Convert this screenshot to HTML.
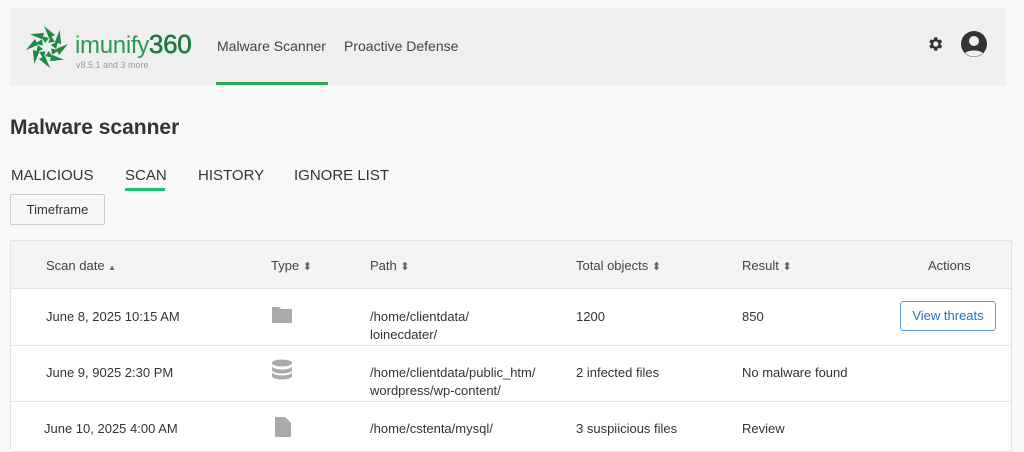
<!DOCTYPE html>
<html><head><style>
body{margin:0;width:1024px;height:448px;overflow:hidden;background:#f8f8f8;font-family:"Liberation Sans",sans-serif;color:#333;position:relative}
.a{position:absolute}
.hdr{left:10px;top:8px;width:996px;height:78px;background:#efefef;border-radius:3px}
.nav{font-size:14px;color:#444}
.tab{font-size:15px;color:#333;top:167px}
.tbl{left:10px;top:240px;width:1000px;height:210px;border:1px solid #e2e2e2;background:#fff}
.th{font-size:13px;color:#444;top:258px}
.td{font-size:13px;color:#333;line-height:18px}
.row{left:11px;width:1000px;border-top:1px solid #e4e4e4}
.s{font-size:11px;color:#666}
</style></head><body>
<div class="a hdr"></div>
<svg class="a" style="left:24px;top:24px" width="46" height="46" viewBox="-23 -23 46 46">
<g fill="#1e8a46">
<g id="p"><path d="M-3,-21 L8,-12 L2,-9 Z"/><path d="M-6,-11 L2,-9 L-2,-4 Z"/></g>
<use href="#p" transform="rotate(45)"/><use href="#p" transform="rotate(90)"/><use href="#p" transform="rotate(135)"/>
<use href="#p" transform="rotate(180)"/><use href="#p" transform="rotate(225)"/><use href="#p" transform="rotate(270)"/><use href="#p" transform="rotate(315)"/>
</g></svg>
<div class="a" style="left:75px;top:29px;font-size:24px;color:#2a9a50;letter-spacing:-0.3px">imunify<span style="color:#1a7a3c;font-size:26px;-webkit-text-stroke:0.5px #1a7a3c">360</span></div>
<div class="a" style="left:76px;top:60px;font-size:9px;color:#999">v8.5.1 and 3 more</div>
<div class="a nav" style="left:217px;top:38px">Malware Scanner</div>
<div class="a nav" style="left:344px;top:38px">Proactive Defense</div>
<div class="a" style="left:216px;top:82px;width:112px;height:3px;background:#2aa65a"></div>
<svg class="a" style="left:926px;top:35px" width="18" height="18" viewBox="0 0 24 24"><path fill="#333" d="M19.4 13a7.5 7.5 0 000-2l2.1-1.6-2-3.5-2.5 1a7 7 0 00-1.7-1L15 3h-4l-.4 2.9a7 7 0 00-1.7 1l-2.5-1-2 3.5L6.5 11a7.5 7.5 0 000 2l-2.1 1.6 2 3.5 2.5-1a7 7 0 001.7 1L11 21h4l.4-2.9a7 7 0 001.7-1l2.5 1 2-3.5zM13 15.5a3.5 3.5 0 110-7 3.5 3.5 0 010 7z"/></svg>
<svg class="a" style="left:960px;top:30px" width="28" height="28" viewBox="0 0 28 28"><circle cx="14" cy="14" r="13" fill="#333"/><circle cx="14" cy="11" r="5" fill="#f0f0f0"/><path d="M5 23a11 6 0 0118 0a13 13 0 01-18 0z" fill="#f0f0f0"/></svg>
<div class="a" style="left:10px;top:116px;font-size:21px;font-weight:bold;color:#333">Malware scanner</div>
<div class="a tab" style="left:11px">MALICIOUS</div>
<div class="a tab" style="left:125px">SCAN</div>
<div class="a" style="left:125px;top:188px;width:40px;height:3px;background:#1fbf7a"></div>
<div class="a tab" style="left:198px">HISTORY</div>
<div class="a tab" style="left:294px">IGNORE LIST</div>
<div class="a" style="left:10px;top:194px;width:93px;height:29px;border:1px solid #ccc;border-radius:2px;background:#f7f7f7;font-size:13px;text-align:center;line-height:29px">Timeframe</div>
<div class="a tbl"></div>
<div class="a" style="left:11px;top:241px;width:1000px;height:47px;background:#f3f3f3"></div>
<div class="a th" style="left:46px">Scan date <span class="s" style="font-size:8px">▲</span></div>
<div class="a th" style="left:271px">Type <span class="s">⬍</span></div>
<div class="a th" style="left:370px">Path <span class="s">⬍</span></div>
<div class="a th" style="left:576px">Total objects <span class="s">⬍</span></div>
<div class="a th" style="left:742px">Result <span class="s">⬍</span></div>
<div class="a th" style="left:928px">Actions</div>
<div class="a row" style="top:288px"></div>
<div class="a row" style="top:345px"></div>
<div class="a row" style="top:401px"></div>
<div class="a td" style="left:46px;top:308px">June 8, 2025 10:15 AM</div>
<svg class="a" style="left:271px;top:306px" width="22" height="18"><path d="M1 1h7l2 2h11v14H1z" fill="#aaa"/></svg>
<div class="a td" style="left:370px;top:308px">/home/clientdata/<br>loinecdater/</div>
<div class="a td" style="left:576px;top:308px">1200</div>
<div class="a td" style="left:742px;top:308px">850</div>
<div class="a" style="left:900px;top:301px;width:94px;height:28px;border:1px solid #5b9bd5;border-radius:3px;color:#2a6fb5;font-size:13px;text-align:center;line-height:28px;background:#fff">View threats</div>
<div class="a td" style="left:46px;top:364px">June 9, 9025 2:30 PM</div>
<svg class="a" style="left:271px;top:359px" width="22" height="24"><ellipse cx="11" cy="4" rx="10" ry="3.5" fill="#aaa"/><path d="M1 7a10 3.5 0 0020 0v4a10 3.5 0 01-20 0zM1 13a10 3.5 0 0020 0v4a10 3.5 0 01-20 0z" fill="#aaa"/></svg>
<div class="a td" style="left:370px;top:364px">/home/clientdata/public_htm/<br>wordpress/wp-content/</div>
<div class="a td" style="left:576px;top:364px">2 infected files</div>
<div class="a td" style="left:742px;top:364px">No malware found</div>
<div class="a td" style="left:44px;top:420px">June 10, 2025 4:00 AM</div>
<svg class="a" style="left:275px;top:417px" width="16" height="20"><path d="M0 0h10l6 6v14H0z" fill="#aaa"/></svg>
<div class="a td" style="left:370px;top:420px">/home/cstenta/mysql/</div>
<div class="a td" style="left:576px;top:420px">3 suspiicious files</div>
<div class="a td" style="left:742px;top:420px">Review</div>
</body></html>
